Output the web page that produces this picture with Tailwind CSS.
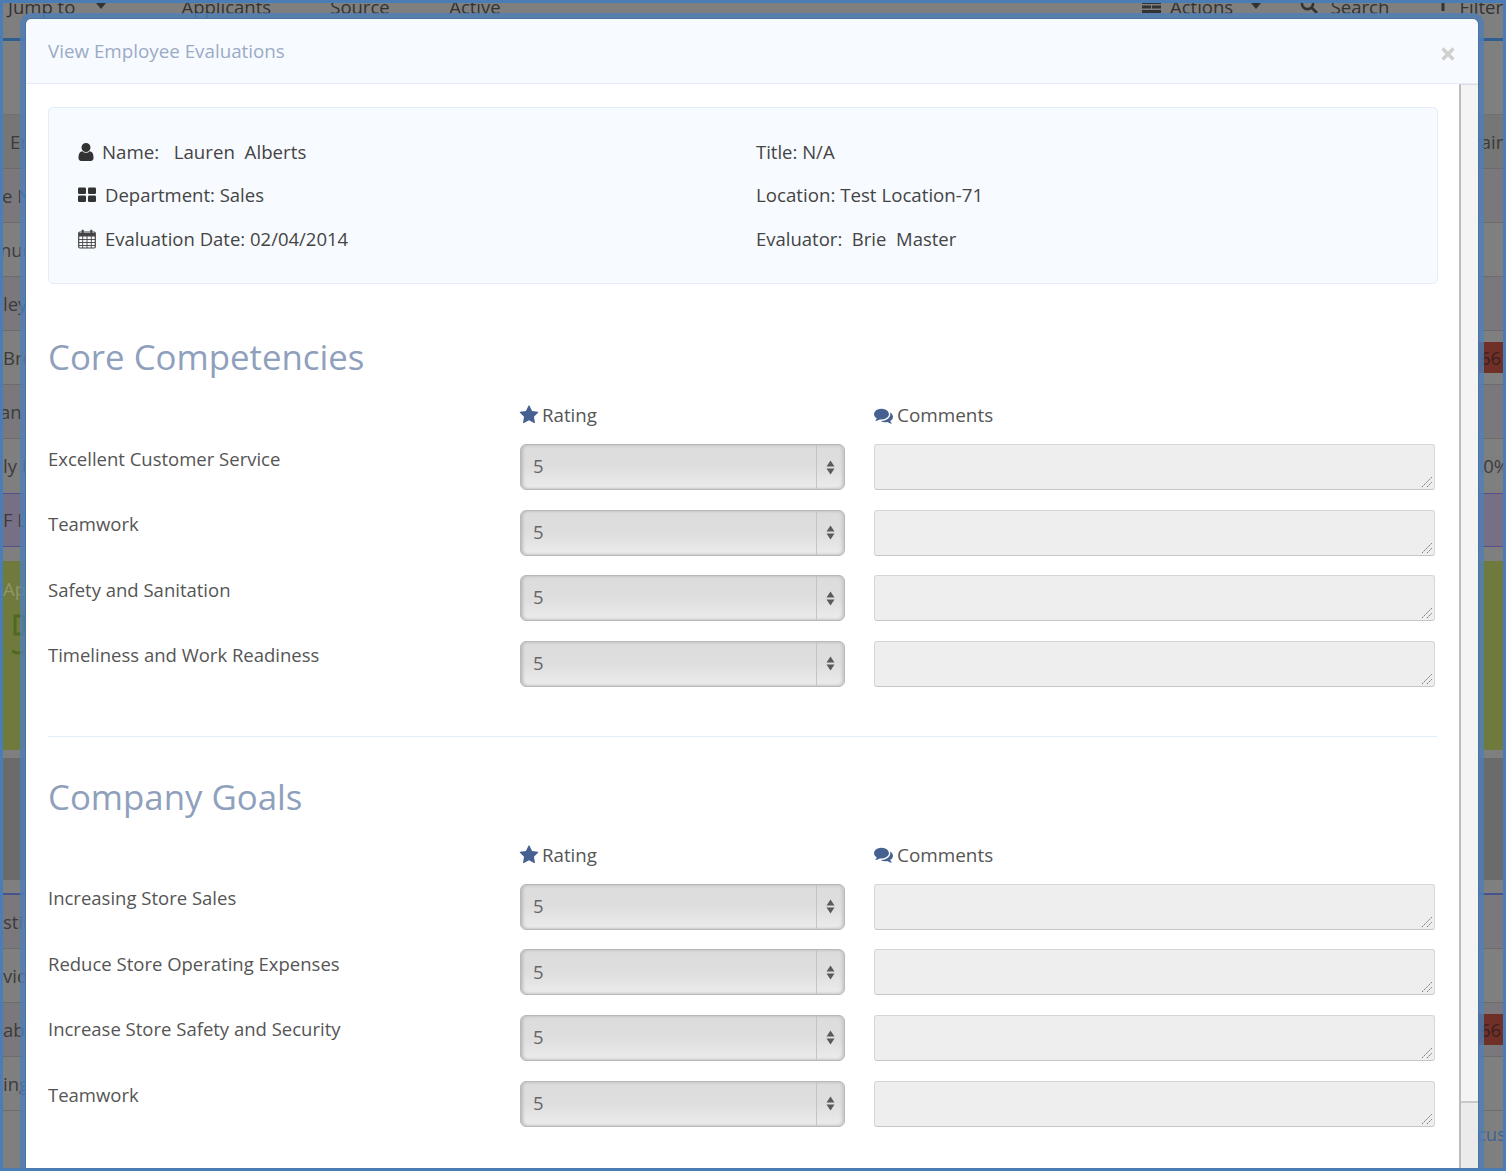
<!DOCTYPE html>
<html><head><meta charset="utf-8"><script src="https://cdn.jsdelivr.net/npm/@tailwindcss/browser@4"></script></head>
<body class="m-0 p-0">
<div class="relative w-[1506px] h-[1171px] overflow-hidden bg-[#7f7f7f] font-['Open_Sans',sans-serif] text-[18.5px] text-[#3b3b3b] border-[3px] border-[#4a7db5]">
  <!-- dimmed page behind -->
  <div class="flex items-start h-[53px] -mt-[15px] pt-[5px] bg-[#7f7f7f] border-b-[3px] border-[#2f5f8f] text-[#333]">
    <span class="ml-[5px] w-[89px]">Jump to</span><span class="w-[86px] pt-[10px]"><svg class="w-[10px] h-[6px]" viewBox="0 0 10 6" fill="#333"><path d="M0 0h10L5 6z"/></svg></span><span class="w-[150px]">Applicants</span><span class="w-[120px]">Source</span><span class="w-[699px]">Active</span><span class="w-[28px] pt-[8px]"><svg class="w-[19px] h-[12px]" viewBox="0 0 19 12" fill="#333"><path d="M0 0h19v3H0zM0 4.5h9v3H0zM10 4.5h9v3h-9zM0 9h19v3H0z"/></svg></span><span class="w-[82px]">Actions</span><span class="w-[49px] pt-[10px]"><svg class="w-[10px] h-[6px]" viewBox="0 0 10 6" fill="#333"><path d="M0 0h10L5 6z"/></svg></span><span class="w-[31px] pt-[3px]"><svg class="w-[18px] h-[18px]" viewBox="0 0 18 18" fill="none" stroke="#333" stroke-width="2.6"><circle cx="7.5" cy="7.5" r="5.6"/><path d="M11.5 11.5l5.5 5.5"/></svg></span><span class="w-[108px]">Search</span><span class="w-[22px] pt-[4px]"><svg class="w-[10px] h-[14px]" viewBox="0 0 10 14" fill="#333"><path d="M0 0h10L6.5 6v8h-3V6z"/></svg></span><span>Filter</span>
  </div>
  <div class="flex flex-col">
    <div class="h-[74px] border-b border-[#707070]"></div>
    <div class="h-[54px] flex justify-between items-center bg-[#767676] border-b border-[#6b6b6b] pl-[7px]"><span>En</span><span class="-mr-[4px]">rain</span></div>
    <div class="h-[54px] flex items-center border-b border-[#6c6c6c] bg-[#7a787c]"><span class="-ml-[1px]">e N</span></div>
    <div class="h-[54px] flex items-center border-b border-[#6c6c6c] bg-[#807f80]"><span class="-ml-[3px]">nur</span></div>
    <div class="h-[54px] flex items-center border-b border-[#6c6c6c] bg-[#7a787c]"><span>ley</span></div>
    <div class="h-[54px] flex justify-between items-center border-b border-[#6c6c6c] bg-[#807f80]"><span>Bro</span><span class="w-[28px] h-[31px] bg-[#6f3028] text-[#3a2020] flex items-center pl-[5px]">66</span></div>
    <div class="h-[54px] flex items-center border-b border-[#6c6c6c] bg-[#7a787c]"><span class="-ml-[3px]">an C</span></div>
    <div class="h-[54px] flex justify-between items-center bg-[#807f80]"><span>ly D</span><span class="-mr-[6px]">0%</span></div>
    <div class="h-[54px] flex items-center border-y border-[#5a4f8e] bg-[#766f86]"><span>F La</span></div>
    <div class="h-[14px]"></div>
    <div class="h-[189px] bg-[#6f7a3c] pt-[14px] text-[#8f9668]"><div>Ap</div><svg class="w-[14px] h-[45px] ml-[9px] mt-[10px]" viewBox="0 0 14 45" fill="none" stroke="#4f6a20" stroke-width="3"><path d="M3 3h9v18H3zM0 38q7 4 14 0"/></svg></div>
    <div class="h-[8px]"></div>
    <div class="h-[122px] bg-[#6b6b6b]"></div>
    <div class="h-[15px] border-b-2 border-[#45528c]"></div>
    <div class="h-[54px] flex items-center border-b border-[#6c6c6c] bg-[#7a787c]"><span>stin</span></div>
    <div class="h-[54px] flex items-center border-b border-[#6c6c6c] bg-[#807f80]"><span>vid</span></div>
    <div class="h-[54px] flex justify-between items-center border-b border-[#6c6c6c] bg-[#7a787c]"><span>abe</span><span class="w-[28px] h-[31px] bg-[#6f3028] text-[#3a2020] flex items-center pl-[5px]">66</span></div>
    <div class="h-[54px] flex items-center border-b border-[#6c6c6c] bg-[#807f80]"><span>ing</span></div>
    <div class="h-[54px] flex justify-end items-center pb-[8px] text-[#3f6391]"><span class="-mr-[3px]">cus</span></div>
    <div class="flex items-center"><span>ng</span></div>
  </div>

  <!-- modal -->
  <div class="absolute left-[23px] top-[16px] w-[1452px] h-[1149px] flex flex-col bg-white rounded-t-[5px] outline-[6px] outline-[#4f80b8]/80 shadow-[0_0_0_1px_#444]">
    <div class="h-[65px] shrink-0 flex items-center justify-between bg-[#f7faff] border-b border-[#e3edf9] rounded-t-[5px] pl-[22px] pr-[22px]">
      <span class="text-[#9aabc6] text-[18.8px]">View Employee Evaluations</span>
      <svg class="w-[16px] h-[16px] mt-[5px]" viewBox="0 0 16 16"><path d="M2.5 2.5l11 11M13.5 2.5l-11 11" stroke="#cfcfcf" stroke-width="3.4"/></svg>
    </div>
    <div class="flex flex-1 min-h-0">
      <div class="flex-1 min-w-0 pl-[22px] pt-[23px] overflow-hidden">
        <div class="h-[177px] w-[1390px] bg-[#f7faff] border border-[#e3edfb] rounded-[5px] pl-[29px] pt-[22px] grid grid-cols-[678px_1fr] auto-rows-[43.5px] items-center text-[#444]">
          <div class="flex items-center"><svg class="w-[16px] h-[18px] mr-[8px] text-[#333]" viewBox="256 128 1280 1536" fill="currentColor"><path d="M1536 1399q0 109-62.5 187t-150.5 78h-854q-88 0-150.5-78t-62.5-187q0-85 8.5-160.5t31.5-152 58.5-131 94-89 134.5-34.5q131 128 313 128t313-128q76 0 134.5 34.5t94 89 58.5 131 31.5 152 8.5 160.5zm-256-887q0 159-112.5 271.5t-271.5 112.5-271.5-112.5-112.5-271.5 112.5-271.5 271.5-112.5 271.5 112.5 112.5 271.5z"/></svg><span class="whitespace-pre text-[18.7px]">Name:   Lauren  Alberts</span></div>
          <div>Title: N/A</div>
          <div class="flex items-center"><svg class="w-[18px] h-[16px] mr-[9px] text-[#333]" viewBox="0 0 18 16" fill="currentColor"><rect x="0" y="0.5" width="8" height="6.5" rx="1.2"/><rect x="10" y="0.5" width="8" height="6.5" rx="1.2"/><rect x="0" y="8.5" width="8" height="6.5" rx="1.2"/><rect x="10" y="8.5" width="8" height="6.5" rx="1.2"/></svg><span>Department: Sales</span></div>
          <div class="text-[18.7px]">Location: Test Location-71</div>
          <div class="flex items-center"><svg class="w-[18px] h-[20px] mr-[9px] text-[#444]" viewBox="0 0 18 20" fill="none" stroke="currentColor"><rect x="0.7" y="3" width="16.6" height="16" rx="1.2" stroke-width="1.2"/><path d="M1 4h16v3.5H1z" fill="currentColor" stroke="none"/><path d="M1 10.5h16M1 13.5h16M1 16.5h16M4.7 7v12M9 7v12M13.3 7v12" stroke-width="0.9"/><path d="M4.7 0.8v4M13.3 0.8v4" stroke-width="2"/></svg><span>Evaluation Date: 02/04/2014</span></div>
          <div class="whitespace-pre">Evaluator:  Brie  Master</div>
        </div>

        <h2 class="mt-[48px] h-[50px] leading-[50px] text-[34.8px] text-[#8fa0bd] font-normal">Core Competencies</h2>
        <div class="mt-[19px] grid grid-cols-[443px_325px_1fr] gap-x-[29px] h-[24px] items-center">
          <div></div>
          <div class="flex items-center text-[#555] text-[18.7px]"><svg class="w-[20px] h-[20px] mr-[3px] -ml-[1px] text-[#46618f]" viewBox="0 0 1792 1792" fill="currentColor"><path d="M1728 647q0 22-26 48l-363 354 86 500q1 7 1 20 0 21-10.5 35.5t-30.5 14.5q-19 0-40-12l-449-236-449 236q-22 12-40 12-21 0-31.5-14.5t-10.5-35.5q0-6 2-20l86-500-364-354q-25-27-25-48 0-37 56-46l502-73 225-455q19-41 49-41t49 41l225 455 502 73q56 9 56 46z"/></svg>Rating</div>
          <div class="flex items-center text-[#555] text-[18.9px]"><svg class="w-[19px] h-[19px] mr-[4px] text-[#46618f]" viewBox="0 0 1792 1792" fill="currentColor"><path d="M1408 768q0 139-94 257t-256.5 186.5-353.5 68.5q-86 0-176-16-124 88-278 128-36 9-86 16h-3q-11 0-20.5-8t-11.5-21q-1-3-1-6.5t.5-6.5 2-6l2.5-5 3.5-5.5 4-5 4.5-5 4-4.5q5-6 23-25t26-29.5 22.5-29 25-38.5 20.5-44q-124-72-195-177t-71-224q0-139 94-257t256.5-186.5 353.5-68.5 353.5 68.5 256.5 186.5 94 257zm384 256q0 120-71 224.5t-195 176.5q10 24 20.5 44t25 38.5 22.5 29 26 29.5 23 25q1 1 4 4.5t4.5 5 4 5 3.5 5.5l2.5 5 2 6 .5 6.5-1 6.5q-3 14-13 22t-22 7q-50-7-86-16-154-40-278-128-90 16-176 16-271 0-472-132 58 4 88 4 161 0 309-45t264-129q125-92 192-212t67-254q0-77-23-152 129 71 204 178t75 230z"/></svg>Comments</div>
        </div>
        <div class="mt-[19px] grid grid-cols-[443px_325px_561px] gap-x-[29px] gap-y-[19.6px] auto-rows-[46px] text-[#555]">
          <div class="pt-[0.5px]">Excellent Customer Service</div>
          <div class="relative rounded-[6px] border border-[#b9b9b9] bg-gradient-to-b from-[#dcdcdc] via-[#dedede] to-[#ececec] shadow-[inset_2px_0_3px_#bdbdbd,inset_-2px_0_3px_#c9c9c9] flex items-center pl-[12px] pb-[2px] text-[#666]">5<div class="absolute right-0 top-0 bottom-0 w-[28px] border-l border-[#c4c4c4] flex flex-col items-center justify-center gap-[2px]"><svg class="w-[9px] h-[15px]" viewBox="0 0 9 15" fill="#5a5a5a"><path d="M4.5 0.5L8.5 6.5H0.5zM4.5 14.5L0.5 8.5H8.5z"/></svg></div></div>
          <div class="relative rounded-[3px] border border-[#d6d6d6] border-b-[#c6c6c6] bg-[#eeeeee]"><svg class="absolute right-[1px] bottom-[1px] w-[12px] h-[12px]" viewBox="0 0 12 12" stroke="#777" stroke-width="1" stroke-dasharray="2 1" fill="none"><path d="M1 11L11 1M6 11L11 6"/></svg></div>

          <div class="pt-[0.5px]">Teamwork</div>
          <div class="relative rounded-[6px] border border-[#b9b9b9] bg-gradient-to-b from-[#dcdcdc] via-[#dedede] to-[#ececec] shadow-[inset_2px_0_3px_#bdbdbd,inset_-2px_0_3px_#c9c9c9] flex items-center pl-[12px] pb-[2px] text-[#666]">5<div class="absolute right-0 top-0 bottom-0 w-[28px] border-l border-[#c4c4c4] flex flex-col items-center justify-center gap-[2px]"><svg class="w-[9px] h-[15px]" viewBox="0 0 9 15" fill="#5a5a5a"><path d="M4.5 0.5L8.5 6.5H0.5zM4.5 14.5L0.5 8.5H8.5z"/></svg></div></div>
          <div class="relative rounded-[3px] border border-[#d6d6d6] border-b-[#c6c6c6] bg-[#eeeeee]"><svg class="absolute right-[1px] bottom-[1px] w-[12px] h-[12px]" viewBox="0 0 12 12" stroke="#777" stroke-width="1" stroke-dasharray="2 1" fill="none"><path d="M1 11L11 1M6 11L11 6"/></svg></div>

          <div class="pt-[0.5px]">Safety and Sanitation</div>
          <div class="relative rounded-[6px] border border-[#b9b9b9] bg-gradient-to-b from-[#dcdcdc] via-[#dedede] to-[#ececec] shadow-[inset_2px_0_3px_#bdbdbd,inset_-2px_0_3px_#c9c9c9] flex items-center pl-[12px] pb-[2px] text-[#666]">5<div class="absolute right-0 top-0 bottom-0 w-[28px] border-l border-[#c4c4c4] flex flex-col items-center justify-center gap-[2px]"><svg class="w-[9px] h-[15px]" viewBox="0 0 9 15" fill="#5a5a5a"><path d="M4.5 0.5L8.5 6.5H0.5zM4.5 14.5L0.5 8.5H8.5z"/></svg></div></div>
          <div class="relative rounded-[3px] border border-[#d6d6d6] border-b-[#c6c6c6] bg-[#eeeeee]"><svg class="absolute right-[1px] bottom-[1px] w-[12px] h-[12px]" viewBox="0 0 12 12" stroke="#777" stroke-width="1" stroke-dasharray="2 1" fill="none"><path d="M1 11L11 1M6 11L11 6"/></svg></div>

          <div class="pt-[0.5px]">Timeliness and Work Readiness</div>
          <div class="relative rounded-[6px] border border-[#b9b9b9] bg-gradient-to-b from-[#dcdcdc] via-[#dedede] to-[#ececec] shadow-[inset_2px_0_3px_#bdbdbd,inset_-2px_0_3px_#c9c9c9] flex items-center pl-[12px] pb-[2px] text-[#666]">5<div class="absolute right-0 top-0 bottom-0 w-[28px] border-l border-[#c4c4c4] flex flex-col items-center justify-center gap-[2px]"><svg class="w-[9px] h-[15px]" viewBox="0 0 9 15" fill="#5a5a5a"><path d="M4.5 0.5L8.5 6.5H0.5zM4.5 14.5L0.5 8.5H8.5z"/></svg></div></div>
          <div class="relative rounded-[3px] border border-[#d6d6d6] border-b-[#c6c6c6] bg-[#eeeeee]"><svg class="absolute right-[1px] bottom-[1px] w-[12px] h-[12px]" viewBox="0 0 12 12" stroke="#777" stroke-width="1" stroke-dasharray="2 1" fill="none"><path d="M1 11L11 1M6 11L11 6"/></svg></div>
        </div>

        <div class="mt-[49px] h-px w-[1389px] bg-[#e3edf7]"></div>

        <h2 class="mt-[35px] h-[50px] leading-[50px] text-[34.8px] text-[#8fa0bd] font-normal">Company Goals</h2>
        <div class="mt-[19px] grid grid-cols-[443px_325px_1fr] gap-x-[29px] h-[24px] items-center">
          <div></div>
          <div class="flex items-center text-[#555] text-[18.7px]"><svg class="w-[20px] h-[20px] mr-[3px] -ml-[1px] text-[#46618f]" viewBox="0 0 1792 1792" fill="currentColor"><path d="M1728 647q0 22-26 48l-363 354 86 500q1 7 1 20 0 21-10.5 35.5t-30.5 14.5q-19 0-40-12l-449-236-449 236q-22 12-40 12-21 0-31.5-14.5t-10.5-35.5q0-6 2-20l86-500-364-354q-25-27-25-48 0-37 56-46l502-73 225-455q19-41 49-41t49 41l225 455 502 73q56 9 56 46z"/></svg>Rating</div>
          <div class="flex items-center text-[#555] text-[18.9px]"><svg class="w-[19px] h-[19px] mr-[4px] text-[#46618f]" viewBox="0 0 1792 1792" fill="currentColor"><path d="M1408 768q0 139-94 257t-256.5 186.5-353.5 68.5q-86 0-176-16-124 88-278 128-36 9-86 16h-3q-11 0-20.5-8t-11.5-21q-1-3-1-6.5t.5-6.5 2-6l2.5-5 3.5-5.5 4-5 4.5-5 4-4.5q5-6 23-25t26-29.5 22.5-29 25-38.5 20.5-44q-124-72-195-177t-71-224q0-139 94-257t256.5-186.5 353.5-68.5 353.5 68.5 256.5 186.5 94 257zm384 256q0 120-71 224.5t-195 176.5q10 24 20.5 44t25 38.5 22.5 29 26 29.5 23 25q1 1 4 4.5t4.5 5 4 5 3.5 5.5l2.5 5 2 6 .5 6.5-1 6.5q-3 14-13 22t-22 7q-50-7-86-16-154-40-278-128-90 16-176 16-271 0-472-132 58 4 88 4 161 0 309-45t264-129q125-92 192-212t67-254q0-77-23-152 129 71 204 178t75 230z"/></svg>Comments</div>
        </div>
        <div class="mt-[19px] grid grid-cols-[443px_325px_561px] gap-x-[29px] gap-y-[19.6px] auto-rows-[46px] text-[#555]">
          <div class="pt-[0.5px]">Increasing Store Sales</div>
          <div class="relative rounded-[6px] border border-[#b9b9b9] bg-gradient-to-b from-[#dcdcdc] via-[#dedede] to-[#ececec] shadow-[inset_2px_0_3px_#bdbdbd,inset_-2px_0_3px_#c9c9c9] flex items-center pl-[12px] pb-[2px] text-[#666]">5<div class="absolute right-0 top-0 bottom-0 w-[28px] border-l border-[#c4c4c4] flex flex-col items-center justify-center gap-[2px]"><svg class="w-[9px] h-[15px]" viewBox="0 0 9 15" fill="#5a5a5a"><path d="M4.5 0.5L8.5 6.5H0.5zM4.5 14.5L0.5 8.5H8.5z"/></svg></div></div>
          <div class="relative rounded-[3px] border border-[#d6d6d6] border-b-[#c6c6c6] bg-[#eeeeee]"><svg class="absolute right-[1px] bottom-[1px] w-[12px] h-[12px]" viewBox="0 0 12 12" stroke="#777" stroke-width="1" stroke-dasharray="2 1" fill="none"><path d="M1 11L11 1M6 11L11 6"/></svg></div>

          <div class="pt-[0.5px]">Reduce Store Operating Expenses</div>
          <div class="relative rounded-[6px] border border-[#b9b9b9] bg-gradient-to-b from-[#dcdcdc] via-[#dedede] to-[#ececec] shadow-[inset_2px_0_3px_#bdbdbd,inset_-2px_0_3px_#c9c9c9] flex items-center pl-[12px] pb-[2px] text-[#666]">5<div class="absolute right-0 top-0 bottom-0 w-[28px] border-l border-[#c4c4c4] flex flex-col items-center justify-center gap-[2px]"><svg class="w-[9px] h-[15px]" viewBox="0 0 9 15" fill="#5a5a5a"><path d="M4.5 0.5L8.5 6.5H0.5zM4.5 14.5L0.5 8.5H8.5z"/></svg></div></div>
          <div class="relative rounded-[3px] border border-[#d6d6d6] border-b-[#c6c6c6] bg-[#eeeeee]"><svg class="absolute right-[1px] bottom-[1px] w-[12px] h-[12px]" viewBox="0 0 12 12" stroke="#777" stroke-width="1" stroke-dasharray="2 1" fill="none"><path d="M1 11L11 1M6 11L11 6"/></svg></div>

          <div class="pt-[0.5px]">Increase Store Safety and Security</div>
          <div class="relative rounded-[6px] border border-[#b9b9b9] bg-gradient-to-b from-[#dcdcdc] via-[#dedede] to-[#ececec] shadow-[inset_2px_0_3px_#bdbdbd,inset_-2px_0_3px_#c9c9c9] flex items-center pl-[12px] pb-[2px] text-[#666]">5<div class="absolute right-0 top-0 bottom-0 w-[28px] border-l border-[#c4c4c4] flex flex-col items-center justify-center gap-[2px]"><svg class="w-[9px] h-[15px]" viewBox="0 0 9 15" fill="#5a5a5a"><path d="M4.5 0.5L8.5 6.5H0.5zM4.5 14.5L0.5 8.5H8.5z"/></svg></div></div>
          <div class="relative rounded-[3px] border border-[#d6d6d6] border-b-[#c6c6c6] bg-[#eeeeee]"><svg class="absolute right-[1px] bottom-[1px] w-[12px] h-[12px]" viewBox="0 0 12 12" stroke="#777" stroke-width="1" stroke-dasharray="2 1" fill="none"><path d="M1 11L11 1M6 11L11 6"/></svg></div>

          <div class="pt-[0.5px]">Teamwork</div>
          <div class="relative rounded-[6px] border border-[#b9b9b9] bg-gradient-to-b from-[#dcdcdc] via-[#dedede] to-[#ececec] shadow-[inset_2px_0_3px_#bdbdbd,inset_-2px_0_3px_#c9c9c9] flex items-center pl-[12px] pb-[2px] text-[#666]">5<div class="absolute right-0 top-0 bottom-0 w-[28px] border-l border-[#c4c4c4] flex flex-col items-center justify-center gap-[2px]"><svg class="w-[9px] h-[15px]" viewBox="0 0 9 15" fill="#5a5a5a"><path d="M4.5 0.5L8.5 6.5H0.5zM4.5 14.5L0.5 8.5H8.5z"/></svg></div></div>
          <div class="relative rounded-[3px] border border-[#d6d6d6] border-b-[#c6c6c6] bg-[#eeeeee]"><svg class="absolute right-[1px] bottom-[1px] w-[12px] h-[12px]" viewBox="0 0 12 12" stroke="#777" stroke-width="1" stroke-dasharray="2 1" fill="none"><path d="M1 11L11 1M6 11L11 6"/></svg></div>
        </div>
      </div>
      <!-- scrollbar -->
      <div class="w-[19px] shrink-0 flex flex-col border-l-2 border-[#bcbcbc] border-t border-t-[#dcdcdc]">
        <div class="h-[1018px] shrink-0 bg-[#f4f4f4] border-b-2 border-[#c8c8c8]"></div>
        <div class="flex-1 bg-[#ebebeb]"></div>
      </div>
    </div>
  </div>
</div>
</body></html>
